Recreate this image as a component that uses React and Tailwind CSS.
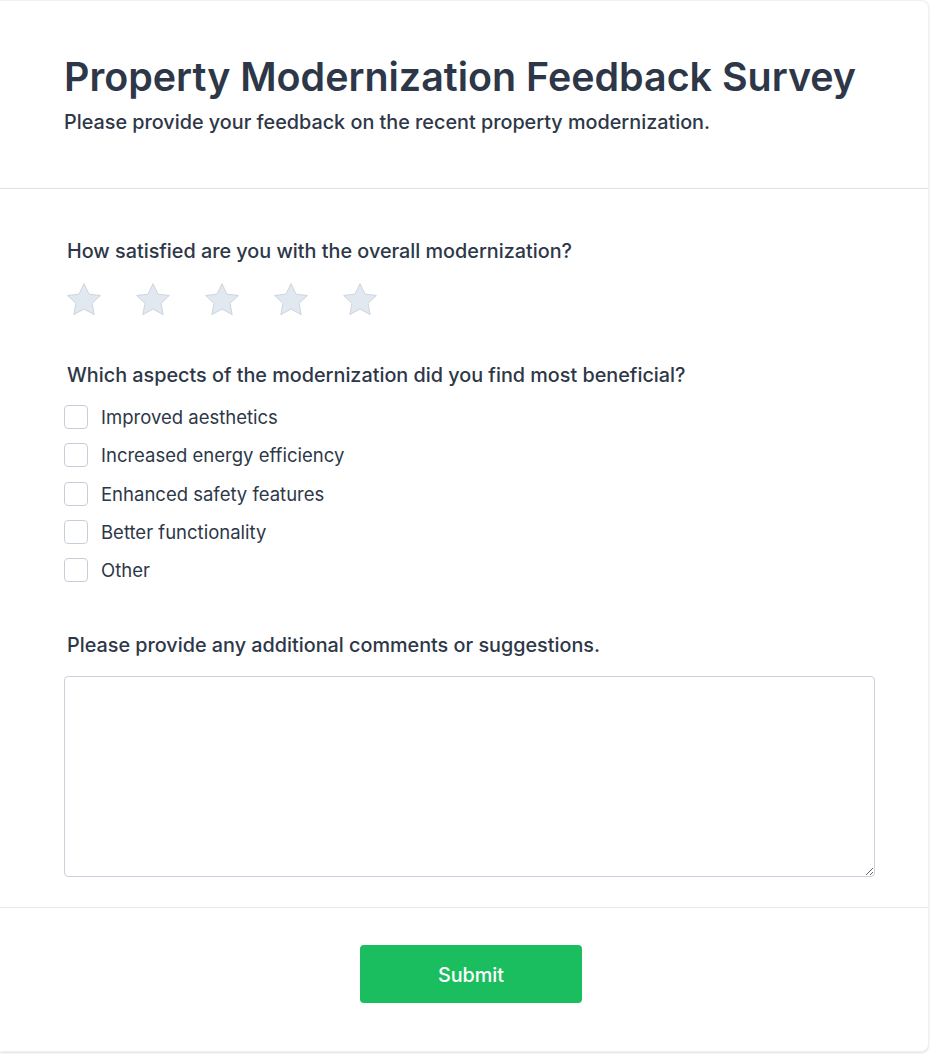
import { useState } from "react";

const options = [
  "Improved aesthetics",
  "Increased energy efficiency",
  "Enhanced safety features",
  "Better functionality",
  "Other",
];

function Star() {
  return (
    <svg width="40" height="40" viewBox="0 0 24 24" className="text-[#e2e8f0]">
      <path
        d="M12 2.2l3 6.3 6.8.8-5 4.7 1.3 6.8L12 17.4l-6.1 3.4 1.3-6.8-5-4.7 6.8-.8z"
        fill="currentColor"
        stroke="#cbd5e0"
        strokeWidth="0.6"
        strokeLinejoin="round"
      />
    </svg>
  );
}

function App() {
  const [checked, setChecked] = useState({});
  const [comment, setComment] = useState("");

  return (
    <div className="min-h-screen bg-white font-['Inter',sans-serif] text-[#2d3748]">
      <div className="w-[929px] bg-white rounded-r-lg border border-l-0 border-[#edf0f5] shadow-sm">
        {/* header */}
        <div className="pl-16 pr-10 pt-[54px] pb-[51px] border-b border-[#dcdfea]">
          <h1 className="text-[39.4px] font-semibold leading-[44px]">Property Modernization Feedback Survey</h1>
          <p className="text-[19.8px] font-medium mt-[8px] leading-[30px]">
            Please provide your feedback on the recent property modernization.
          </p>
        </div>

        {/* questions */}
        <div className="pl-16 pr-[53px] pt-[47px] pb-[30px]">
          <label className="block text-[19.8px] font-medium leading-[30px] pl-[3px]">
            How satisfied are you with the overall modernization?
          </label>
          <div className="flex gap-[29px] mt-[14px]">
            {[1, 2, 3, 4, 5].map((n) => (
              <button key={n} type="button">
                <Star />
              </button>
            ))}
          </div>

          <label className="block text-[19.8px] font-medium leading-[30px] pl-[3px] mt-[40px]">
            Which aspects of the modernization did you find most beneficial?
          </label>
          <div className="mt-[15px] flex flex-col gap-[14.25px]">
            {options.map((o) => (
              <label key={o} className="flex items-center gap-[13px] text-[18.5px] leading-6">
                <input
                  type="checkbox"
                  checked={!!checked[o]}
                  onChange={() => setChecked({ ...checked, [o]: !checked[o] })}
                  className="appearance-none w-6 h-6 rounded border border-[#c8ced9] bg-white checked:bg-green-500"
                />
                <span>{o}</span>
              </label>
            ))}
          </div>

          <label className="block text-[19.8px] font-medium leading-[30px] pl-[3px] mt-[48px]">
            Please provide any additional comments or suggestions.
          </label>
          <textarea
            value={comment}
            onChange={(e) => setComment(e.target.value)}
            className="block w-full h-[201px] mt-[16px] rounded border border-[#cbd0dc] p-3 outline-none"
          />
        </div>

        {/* footer */}
        <div className="border-t border-[#e8eaf0] flex justify-center pl-[14px] pt-[37px] pb-[48px]">
          <button className="w-[222px] h-[58px] pt-[3px] rounded bg-[#1abe5e] text-white text-[19.8px] font-medium">
            Submit
          </button>
        </div>
      </div>
    </div>
  );
}

export default App;
